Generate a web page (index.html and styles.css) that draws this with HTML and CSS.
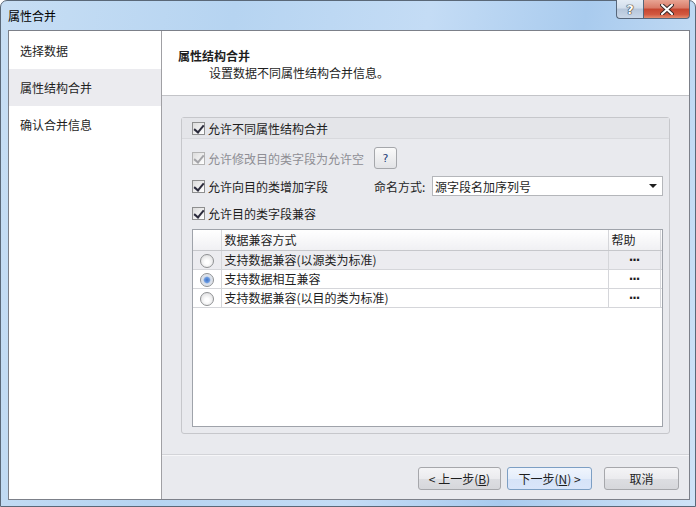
FILE: index.html
```html
<!DOCTYPE html>
<html>
<head>
  <title>属性合并</title>
  <link rel="stylesheet" href="styles.css">
</head>
<body>
  <div class="window">
    <div class="titlebar">
      <span class="title-text">属性合并</span>
      <div class="caption-buttons">
        <span class="cap-btn help-btn">?</span>
        <span class="cap-btn close-btn">
          <svg width="14" height="11" viewBox="0 0 14 11"><path d="M2 1 L12 10 M12 1 L2 10" stroke="#3a2a2a" stroke-width="4" stroke-linecap="round"/><path d="M2 1 L12 10 M12 1 L2 10" stroke="#fff" stroke-width="2" stroke-linecap="round"/></svg>
        </span>
      </div>
    </div>

    <div class="client">
      <!-- Left step list -->
      <div class="nav">
        <div class="nav-item">选择数据</div>
        <div class="nav-item selected">属性结构合并</div>
        <div class="nav-item">确认合并信息</div>
      </div>

      <div class="main">
        <div class="page-header">
          <div class="page-title">属性结构合并</div>
          <div class="page-desc">设置数据不同属性结构合并信息。</div>
        </div>

        <div class="page-body">
          <div class="group-box">
            <div class="group-head">
              <label class="check"><span class="box checked"></span>允许不同属性结构合并</label>
            </div>
            <div class="group-content">
              <div class="opt-row">
                <label class="check disabled"><span class="box checked"></span>允许修改目的类字段为允许空</label>
                <span class="small-btn">?</span>
              </div>
              <div class="opt-row">
                <label class="check col-fixed"><span class="box checked"></span>允许向目的类增加字段</label>
                <span class="field-label">命名方式:</span>
                <div class="combo">
                  <span>源字段名加序列号</span>
                  <span class="combo-arrow"></span>
                </div>
              </div>
              <div class="opt-row short">
                <label class="check"><span class="box checked"></span>允许目的类字段兼容</label>
              </div>

              <div class="grid">
                <table>
                  <colgroup>
                    <col class="c-sel"><col><col class="c-help"><col class="c-end">
                  </colgroup>
                  <tr class="head">
                    <td></td><td>数据兼容方式</td><td>帮助</td><td></td>
                  </tr>
                  <tr class="current">
                    <td><span class="radio"></span></td><td>支持数据兼容(以源类为标准)</td><td class="dots">···</td><td></td>
                  </tr>
                  <tr>
                    <td><span class="radio on"></span></td><td>支持数据相互兼容</td><td class="dots">···</td><td></td>
                  </tr>
                  <tr>
                    <td><span class="radio"></span></td><td>支持数据兼容(以目的类为标准)</td><td class="dots">···</td><td></td>
                  </tr>
                </table>
              </div>
            </div>
          </div>
        </div>

        <div class="footer">
          <button class="btn">&lt; 上一步(<u>B</u>)</button>
          <button class="btn default">下一步(<u>N</u>) &gt;</button>
          <button class="btn cancel">取消</button>
        </div>
      </div>
    </div>
  </div>
</body>
</html>
```

FILE: styles.css
```css
body {
  margin: 0;
  padding: 0;
  background-color: #fff;
  font-family: "Noto Sans CJK SC", "Microsoft YaHei", sans-serif;
  font-size: 12px;
  color: #1e1e1e;
}

.window {
  width: 696px;
  height: 507px;
  box-sizing: border-box;
  border: 1px solid #5a6878;
  border-radius: 7px 7px 0 0;
  background: linear-gradient(100deg, #c7def4 0%, #b6d4f1 30%, #c4dcf5 55%, #a9cbee 75%, #cfe3f7 100%);
  display: flex;
  flex-direction: column;
}

.titlebar {
  height: 29px;
  display: flex;
  justify-content: space-between;
  align-items: flex-start;
}

.title-text {
  margin: 7px 0 0 7px;
  font-size: 12px;
  line-height: 16px;
  color: #000;
}

.caption-buttons {
  display: flex;
  margin-right: 5px;
  margin-top: -1px;
}

.cap-btn {
  height: 19px;
  box-sizing: border-box;
  border: 1px solid #56667a;
  border-top: none;
  display: flex;
  align-items: center;
  justify-content: center;
}

.help-btn {
  width: 27px;
  border-radius: 0 0 0 4px;
  border-right: none;
  background: linear-gradient(#e4ecf5 0%, #d3dfec 45%, #b6c6da 50%, #c9d7e8 100%);
  font-size: 13px;
  font-weight: bold;
  color: #fff;
  text-shadow: 0 0 1px #222, 0 0 1px #222, 0 0 1px #222;
  font-family: "DejaVu Sans", sans-serif;
}

.close-btn {
  width: 47px;
  border-radius: 0 0 4px 0;
  background: linear-gradient(#e8a493 0%, #d97a67 45%, #c6452f 50%, #d2583f 80%, #e48d6f 100%);
}

.client {
  flex: 1;
  margin: 0 5px 6px 7px;
  border: 1px solid #7c8089;
  display: flex;
  background-color: #e9eaee;
}

.nav {
  width: 152px;
  background-color: #fff;
  border-right: 1px solid #a0a0a4;
  padding-top: 1px;
}

.nav-item {
  height: 37px;
  line-height: 37px;
  padding-left: 11px;
}

.nav-item.selected {
  background-color: #ebebef;
}

.main {
  flex: 1;
  display: flex;
  flex-direction: column;
}

.page-header {
  height: 65px;
  background-color: #fff;
  border-bottom: 1px solid #c3c4c8;
  padding: 16px 0 0 16px;
  box-sizing: border-box;
}

.page-title {
  font-weight: bold;
  line-height: 17px;
}

.page-desc {
  padding-left: 31px;
  line-height: 17px;
}

.page-body {
  padding: 21px 19px 0 19px;
}

.group-box {
  height: 317px;
  box-sizing: border-box;
  border: 1px solid #c6c7cb;
  border-radius: 3px;
  display: flex;
  flex-direction: column;
}

.group-head {
  height: 20px;
  background-color: #e4e5e9;
  border-bottom: 1px solid #d8d9dd;
  padding-left: 10px;
  display: flex;
  align-items: center;
}

.group-content {
  flex: 1;
  padding: 5px 6px 6px 10px;
  display: flex;
  flex-direction: column;
}

.opt-row {
  height: 28px;
  display: flex;
  align-items: center;
}

.opt-row.short {
  height: 26px;
}

.check {
  display: flex;
  align-items: center;
  color: #1e1e1e;
}

.check.disabled {
  color: #8e8e94;
}

.col-fixed {
  width: 182px;
}

.box {
  width: 13px;
  height: 13px;
  box-sizing: border-box;
  border: 1px solid #8e8f8f;
  background: linear-gradient(135deg, #dcdcdc, #fff);
  margin-right: 3px;
  position: relative;
}

.box.checked::after {
  content: "";
  position: absolute;
  left: 3px;
  top: 0px;
  width: 4px;
  height: 8px;
  border: solid #2b2b3c;
  border-width: 0 2px 2px 0;
  transform: rotate(40deg);
}

.check.disabled .box {
  border-color: #b4b4b4;
}

.check.disabled .box::after {
  border-color: #a4a4a8;
}

.small-btn {
  width: 23px;
  height: 22px;
  box-sizing: border-box;
  margin-left: 10px;
  border: 1px solid #a5a7ab;
  border-radius: 3px;
  background: linear-gradient(#fafafa, #e2e3e6);
  display: flex;
  align-items: center;
  justify-content: center;
  font-size: 11px;
  color: #1a3c78;
  font-family: "DejaVu Sans", sans-serif;
}

.field-label {
  width: 58px;
}

.combo {
  flex: 1;
  height: 20px;
  box-sizing: border-box;
  border: 1px solid #b4b6ba;
  background-color: #fff;
  display: flex;
  align-items: center;
  justify-content: space-between;
  padding: 0 5px 0 2px;
}

.combo-arrow {
  width: 0;
  height: 0;
  border-left: 4px solid transparent;
  border-right: 4px solid transparent;
  border-top: 4px solid #1e1e1e;
}

.grid {
  margin-top: 3px;
  flex: 1;
  border: 1px solid #9fa3aa;
  background-color: #fff;
}

.grid table {
  width: 100%;
  border-collapse: collapse;
  table-layout: fixed;
  line-height: 16px;
}

.c-sel { width: 28px; }
.c-help { width: 52px; }
.c-end { width: 2px; }

.grid td {
  border-right: 1px solid #d5d6da;
  border-bottom: 1px solid #d5d6da;
  height: 18px;
  padding: 0 0 0 3px;
  white-space: nowrap;
  overflow: hidden;
}

.grid td:last-child {
  border-right: none;
  padding: 0;
}

.grid tr.head td {
  height: 20px;
  background: linear-gradient(#ffffff, #f0f0f3);
  border-bottom-color: #c6c7cb;
}

.grid tr.current td {
  background-color: #ececf0;
}

.grid td:first-child {
  text-align: center;
  padding: 0;
}

.grid td.dots {
  text-align: center;
  padding: 0;
  font-weight: bold;
  letter-spacing: -1px;
  font-family: "DejaVu Sans", sans-serif;
}

.radio {
  display: inline-block;
  width: 12px;
  height: 12px;
  border-radius: 50%;
  border: 1px solid #8f9193;
  background: radial-gradient(circle at 50% 60%, #ffffff 20%, #d6d6d8 100%);
  vertical-align: middle;
}

.radio.on {
  background: radial-gradient(circle, #3e72c8 0%, #6a9ae0 30%, #d6dde8 45%, #eef0f3 100%);
}

.footer {
  margin-top: 20px;
  border-top: 1px solid #d3d4d8;
  box-shadow: inset 0 1px 0 #f6f6f8;
  display: flex;
  justify-content: flex-end;
  padding: 12px 10px 0 0;
}

.btn {
  height: 23px;
  box-sizing: border-box;
  border: 1px solid #a6a7ab;
  border-radius: 3px;
  background: linear-gradient(#f4f4f6 0%, #ebebee 50%, #dddee2 51%, #d6d7db 100%);
  font-family: inherit;
  font-size: 12px;
  color: #1e1e1e;
  padding: 0;
  width: 83px;
}

.btn.default {
  width: 85px;
  margin-left: 6px;
  border-color: #7d9fc4;
  background: linear-gradient(#f0f5fd 0%, #e4edfb 50%, #d6e3f8 51%, #d9e5fa 100%);
}

.btn.cancel {
  width: 75px;
  margin-left: 12px;
}
```
